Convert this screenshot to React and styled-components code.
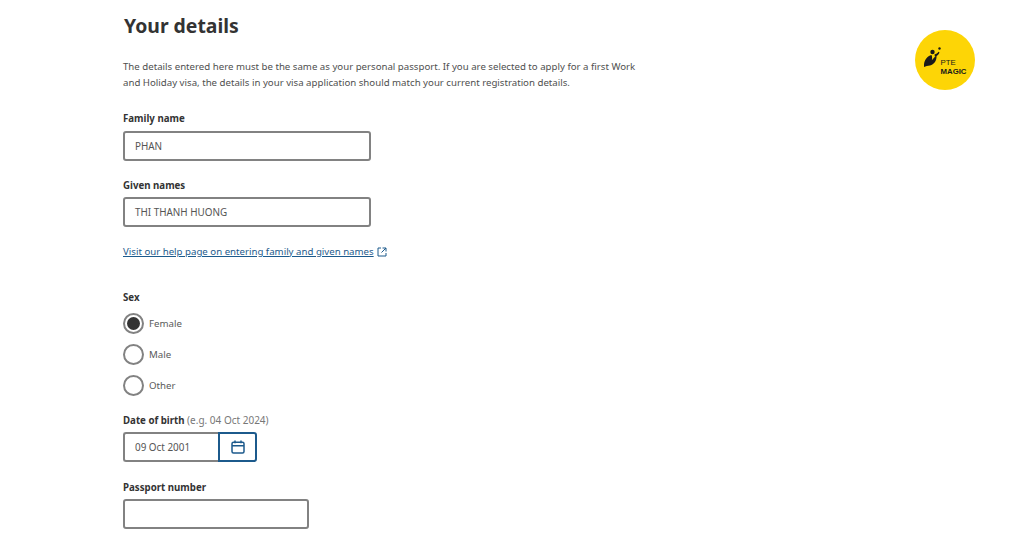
import React from "react";
import styled, { createGlobalStyle } from "styled-components";

const Global = createGlobalStyle`
  html, body { margin: 0; padding: 0; background: #fff; }
  body { font-family: "Noto Sans", "Open Sans", Arial, sans-serif; color: #4a4a4a; overflow: hidden; }
`;

const Page = styled.div`
  width: 1024px;
  height: 537px;
  display: flex;
  justify-content: space-between;
  align-items: flex-start;
  padding-left: 123px;
  padding-right: 49px;
  box-sizing: border-box;
  overflow: hidden;
`;

const Form = styled.main`
  width: 520px;
  display: flex;
  flex-direction: column;
`;

const Title = styled.h1`
  margin: 11px 0 0 1px;
  font-size: 19.4px;
  line-height: 30px;
  font-weight: 700;
  color: #333;
`;

const Intro = styled.p`
  margin: 18px 0 0;
  font-size: 9.66px;
  line-height: 16px;
  color: #4f4f4f;
  white-space: nowrap;
`;

const Field = styled.div`
  display: flex;
  flex-direction: column;
  margin-top: ${(p) => p.$top}px;
`;

const Label = styled.label`
  font-size: 9.7px;
  line-height: 14px;
  font-weight: 700;
  color: #333;
  margin-bottom: ${(p) => p.$gap ?? 5}px;
`;

const Hint = styled.span`
  font-weight: 400;
  font-size: 10px;
  color: #777;
`;

const Input = styled.div`
  width: ${(p) => p.$width}px;
  height: 30px;
  box-sizing: border-box;
  border: 2px solid #828282;
  border-radius: 3px;
  padding-left: 10px;
  display: flex;
  align-items: center;
  font-size: 9.9px;
  color: #555;
`;

const HelpLink = styled.a`
  margin-top: 18px;
  font-size: 9.66px;
  line-height: 14px;
  color: #1c5a8c;
  text-decoration: underline;
  display: flex;
  align-items: center;
  gap: 3px;
`;

const RadioGroup = styled.div`
  display: flex;
  flex-direction: column;
  gap: 10px;
  margin-top: 1px;
`;

const RadioRow = styled.div`
  display: flex;
  align-items: center;
  gap: 5px;
  height: 21px;
  font-size: 9.7px;
  color: #5a5a5a;
`;

const Radio = styled.span`
  width: 21px;
  height: 21px;
  box-sizing: border-box;
  border: 2px solid #828282;
  border-radius: 50%;
  display: flex;
  align-items: center;
  justify-content: center;
`;

const Dot = styled.span`
  width: 13px;
  height: 13px;
  border-radius: 50%;
  background: #333;
`;

const DateRow = styled.div`
  display: flex;
  width: 134px;
  height: 30px;
`;

const DateInput = styled(Input)`
  border-right: none;
  border-radius: 3px 0 0 3px;
`;

const CalendarButton = styled.div`
  width: 39px;
  height: 30px;
  box-sizing: border-box;
  border: 2px solid #1c5a8c;
  border-radius: 0 3px 3px 0;
  display: flex;
  align-items: center;
  justify-content: center;
  color: #1c5a8c;
`;

const Badge = styled.div`
  width: 60px;
  height: 60px;
  margin-top: 30px;
  border-radius: 50%;
  background: #fdd506;
  display: flex;
  align-items: center;
  justify-content: center;
  flex-shrink: 0;
`;

const MarkSvg = styled.svg`
  margin-top: -6px;
  flex-shrink: 0;
`;

const BadgeText = styled.div`
  display: flex;
  flex-direction: column;
  margin: 13px 0 0 -1px;
  font-family: "Liberation Sans", Arial, sans-serif;
  font-size: 7.8px;
  line-height: 9px;
  color: #1a1a1a;
`;

const Magic = styled.span`
  font-weight: 700;
`;

const ExternalIcon = () => (
  <svg width="10" height="10" viewBox="0 0 10 10" fill="none" stroke="#1c5a8c" strokeWidth="1">
    <path d="M4 1H1v8h8V6M5.500 1H9v3.500M9 1L4.500 5.500" />
  </svg>
);

const CalendarIcon = () => (
  <svg width="14" height="14" viewBox="0 0 14 14" fill="none" stroke="currentColor" strokeWidth="1.500">
    <rect x="1" y="2.200" width="12" height="10.800" rx="1.500" />
    <path d="M1 5.800h12M4 .5v2.800M10 .5v2.800" />
  </svg>
);

const BadgeMark = () => (
  <MarkSvg width="18" height="20" viewBox="0 0 18 20" fill="#1a1a1a">
    <path d="M0 20C-.5 14 2.500 9.500 7.500 8c.8 1.800.8 3.500.3 5.200L12.500 8c.5 5-2 9.500-6.500 10.500-2.200.4-4.300.7-6 1.500z" />
    <circle cx="8.500" cy="5" r="2.200" />
    <path d="M10.500 7.500c1.800-.3 3-1.200 4-2.700l1 .6c-.8 2.200-2.500 3.700-4.600 4.100z" />
    <circle cx="15.500" cy="1.500" r="1.200" />
  </MarkSvg>
);

export default function App() {
  return (
    <Page>
      <Global />
      <Form>
        <Title>Your details</Title>
        <Intro>
          The details entered here must be the same as your personal passport. If you are selected to apply for a first Work
          <br />
          and Holiday visa, the details in your visa application should match your current registration details.
        </Intro>
        <Field $top={21}>
          <Label>Family name</Label>
          <Input $width={248}>PHAN</Input>
        </Field>
        <Field $top={18}>
          <Label $gap={4}>Given names</Label>
          <Input $width={248}>THI THANH HUONG</Input>
        </Field>
        <HelpLink>
          Visit our help page on entering family and given names <ExternalIcon />
        </HelpLink>
        <Field $top={32}>
          <Label $gap={7}>Sex</Label>
          <RadioGroup>
            <RadioRow>
              <Radio>
                <Dot />
              </Radio>
              Female
            </RadioRow>
            <RadioRow>
              <Radio />
              Male
            </RadioRow>
            <RadioRow>
              <Radio />
              Other
            </RadioRow>
          </RadioGroup>
        </Field>
        <Field $top={17}>
          <Label $gap={4}>
            Date of birth <Hint>(e.g. 04 Oct 2024)</Hint>
          </Label>
          <DateRow>
            <DateInput $width={95}>09 Oct 2001</DateInput>
            <CalendarButton>
              <CalendarIcon />
            </CalendarButton>
          </DateRow>
        </Field>
        <Field $top={19}>
          <Label $gap={4}>Passport number</Label>
          <Input $width={186} />
        </Field>
      </Form>
      <Badge>
        <BadgeMark />
        <BadgeText>
          <span>PTE</span>
          <Magic>MAGIC</Magic>
        </BadgeText>
      </Badge>
    </Page>
  );
}
